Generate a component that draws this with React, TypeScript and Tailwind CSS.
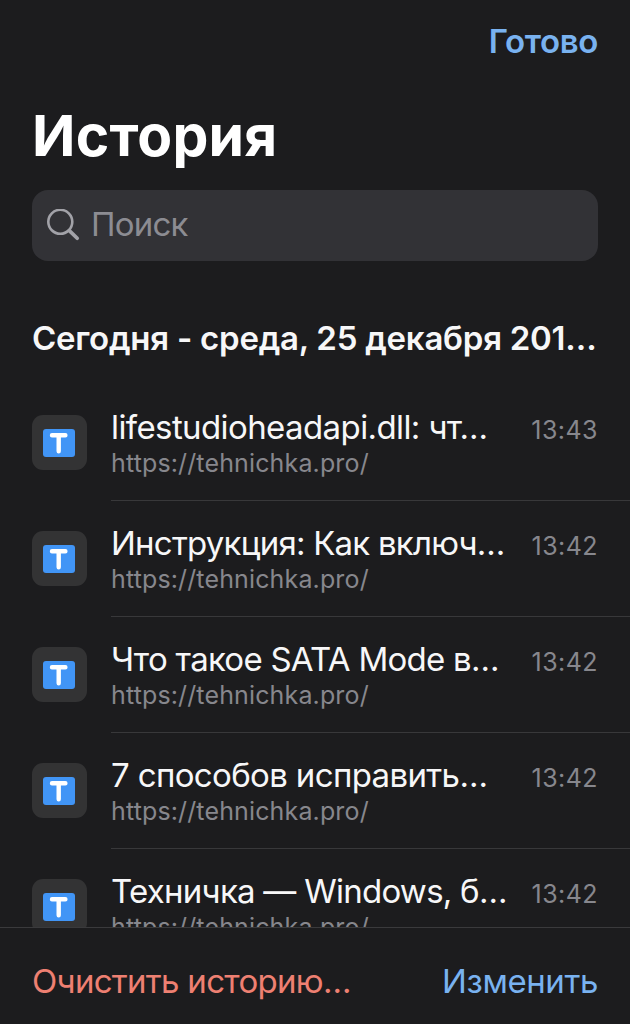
interface HistoryEntry {
  id: number;
  title: string;
  titleClass: string;
  url: string;
  time: string;
}

const entries: HistoryEntry[] = [
  { id: 1, title: 'lifestudioheadapi.dll: чт…', titleClass: 'tracking-[-0.6px]', url: 'https://tehnichka.pro/', time: '13:43' },
  { id: 2, title: 'Инструкция: Как включ…', titleClass: 'tracking-[-0.77px]', url: 'https://tehnichka.pro/', time: '13:42' },
  { id: 3, title: 'Что такое SATA Mode в…', titleClass: 'tracking-[-0.74px]', url: 'https://tehnichka.pro/', time: '13:42' },
  { id: 4, title: '7 способов исправить…', titleClass: 'tracking-[-0.64px]', url: 'https://tehnichka.pro/', time: '13:42' },
  { id: 5, title: 'Техничка — Windows, б…', titleClass: 'tracking-[-0.74px]', url: 'https://tehnichka.pro/', time: '13:42' },
];

function SearchIcon() {
  return (
    <svg width="34" height="34" viewBox="0 0 34 34" fill="none" stroke="#a2a2a8" strokeLinecap="round">
      <circle cx="14.3" cy="12.8" r="12" strokeWidth="2.6" />
      <path d="M23.3 21.6L31.2 29.3" strokeWidth="3.7" />
    </svg>
  );
}

function SiteIcon() {
  return (
    <div className="mt-[30px] flex h-[55px] w-[55px] shrink-0 items-center justify-center rounded-[11px] bg-[#333334] pr-px">
      <svg width="32" height="28" viewBox="0 0 32 28">
        <rect width="32" height="28" rx="3" fill="#4195f6" />
        <path d="M9 6.3H22.4M15.7 6.3V22.2" fill="none" stroke="#fff" strokeWidth="4.4" strokeLinecap="round" />
      </svg>
    </div>
  );
}

function HistoryRow({ entry }: { entry: HistoryEntry }) {
  return (
    <li className="flex h-[116px] shrink-0 pl-8">
      <SiteIcon />
      <div className="ml-6 flex min-w-0 flex-1 border-b border-[#38383a] pr-8">
        <div className="min-w-0 flex-1 pt-[22px]">
          <p className={`whitespace-nowrap text-[33px] leading-10 text-[#f7f7f8] ${entry.titleClass}`}>{entry.title}</p>
          <p className="whitespace-nowrap text-[25px] leading-8 tracking-[0.14px] text-[#87878d]">{entry.url}</p>
        </div>
        <span className="pt-[25px] text-[25px] leading-10 tracking-[0.45px] text-[#87878d]">{entry.time}</span>
      </div>
    </li>
  );
}

export default function App() {
  return (
    <div className="flex h-screen flex-col overflow-hidden bg-[#1c1c1e] font-['Inter',sans-serif]">
      <header className="flex flex-col px-8 pt-[21px]">
        <button className="self-end text-[33px] font-semibold leading-10 tracking-[-0.35px] text-[#79b2f0]">Готово</button>
        <h1 className="mt-[41px] text-[57px] font-bold leading-[68px] tracking-[0.2px] text-white">История</h1>
        <div className="mt-5 flex h-[71px] items-center rounded-2xl bg-[#323236] pl-[14px]">
          <SearchIcon />
          <span className="ml-[11px] pb-1 text-[33px] leading-10 tracking-[-0.8px] text-[#8c8c92]">Поиск</span>
        </div>
      </header>

      <main className="flex min-h-0 flex-1 flex-col overflow-hidden pt-[57px]">
        <h2 className="whitespace-nowrap px-8 text-[33px] font-semibold leading-10 tracking-[-0.25px] text-[#f7f7f8]">
          Сегодня - среда, 25 декабря 201…
        </h2>
        <ul className="mt-[27px] flex flex-col">
          {entries.map(entry => (
            <HistoryRow key={entry.id} entry={entry} />
          ))}
        </ul>
      </main>

      <footer className="flex h-[97px] shrink-0 justify-between border-t border-[#3a3a3c] px-8 pt-[33px] text-[33px] leading-10">
        <button className="self-start tracking-[-0.7px] text-[#ee8072]">Очистить историю…</button>
        <button className="self-start tracking-[-0.4px] text-[#79b2f0]">Изменить</button>
      </footer>
    </div>
  );
}
